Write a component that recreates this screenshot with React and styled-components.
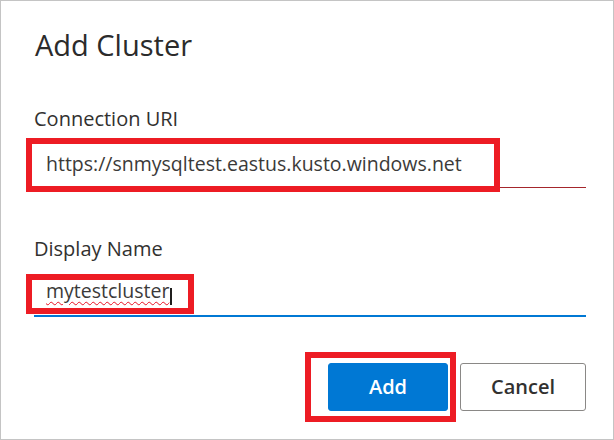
import React from "react";
import styled, { createGlobalStyle } from "styled-components";

const Global = createGlobalStyle`
  html, body { margin: 0; padding: 0; background: #ffffff; }
  body { font-family: "Open Sans", "Noto Sans", sans-serif; }
`;

const Dialog = styled.div`
  box-sizing: border-box;
  width: 614px;
  height: 440px;
  border: 1px solid #c4c4c4;
  background: #ffffff;
  padding: 26px 27px 0 33px;
  display: flex;
  flex-direction: column;
  color: #323130;
`;

const Title = styled.h1`
  margin: 0;
  padding-left: 1px;
  font-size: 29px;
  line-height: 36px;
  font-weight: 400;
  color: #2b2b2b;
`;

const Field = styled.div`
  display: flex;
  flex-direction: column;
  margin-top: ${(p) => p.$top}px;
`;

const Label = styled.label`
  font-size: 20px;
  line-height: 28px;
  font-weight: 500;
  color: #323130;
`;

const InputBox = styled.div`
  position: relative;
  box-sizing: border-box;
  margin-top: ${(p) => p.$gap}px;
  height: ${(p) => (p.$focused ? 47 : 45)}px;
  border-bottom: ${(p) => (p.$focused ? "2px solid #0078d4" : "1px solid #a4262c")};
  padding: 1px 12px 0 12px;
`;

const InputText = styled.div`
  font-size: 19.5px;
  line-height: 40px;
  color: #3b3a39;
  white-space: nowrap;
`;

const Misspelled = styled.span`
  text-decoration: underline wavy #e81123;
  text-decoration-thickness: 1px;
  text-underline-offset: 3px;
`;

const Caret = styled.span`
  display: inline-block;
  width: 2px;
  height: 17px;
  margin-left: 1px;
  background: #201f1e;
  vertical-align: -7px;
`;

const Highlight = styled.div`
  position: absolute;
  box-sizing: border-box;
  border: 6px solid #ed1c24;
  left: ${(p) => p.$x}px;
  top: ${(p) => p.$y}px;
  width: ${(p) => p.$w}px;
  height: ${(p) => p.$h}px;
  pointer-events: none;
`;

const Actions = styled.div`
  display: flex;
  justify-content: flex-end;
  gap: 12px;
  margin-top: 46px;
`;

const ButtonWrap = styled.div`
  position: relative;
  display: flex;
`;

const Button = styled.button`
  box-sizing: border-box;
  width: ${(p) => p.$w}px;
  height: 48px;
  border-radius: 3px;
  font-family: "Open Sans", "Noto Sans", sans-serif;
  font-size: 20px;
  font-weight: 600;
  line-height: 46px;
  padding: 0;
  cursor: pointer;
  background: ${(p) => (p.$primary ? "#0078d4" : "#ffffff")};
  color: ${(p) => (p.$primary ? "#ffffff" : "#323130")};
  border: 1px solid ${(p) => (p.$primary ? "#0078d4" : "#8a8886")};
`;

export default function App() {
  return (
    <>
      <Global />
      <Dialog>
        <Title>Add Cluster</Title>

        <Field $top={42}>
          <Label>Connection URI</Label>
          <InputBox $gap={10}>
            <InputText>https://snmysqltest.eastus.kusto.windows.net</InputText>
            <Highlight $x={-8} $y={-5} $w={474} $h={54} />
          </InputBox>
        </Field>

        <Field $top={47}>
          <Label>Display Name</Label>
          <InputBox $gap={7} $focused>
            <InputText>
              <Misspelled>mytestcluster</Misspelled>
              <Caret />
            </InputText>
            <Highlight $x={-8} $y={4} $w={168} $h={40} />
          </InputBox>
        </Field>

        <Actions>
          <ButtonWrap>
            <Button $primary $w={120}>Add</Button>
            <Highlight $x={-23} $y={-11} $w={151} $h={70} />
          </ButtonWrap>
          <ButtonWrap>
            <Button $w={126}>Cancel</Button>
          </ButtonWrap>
        </Actions>
      </Dialog>
    </>
  );
}
